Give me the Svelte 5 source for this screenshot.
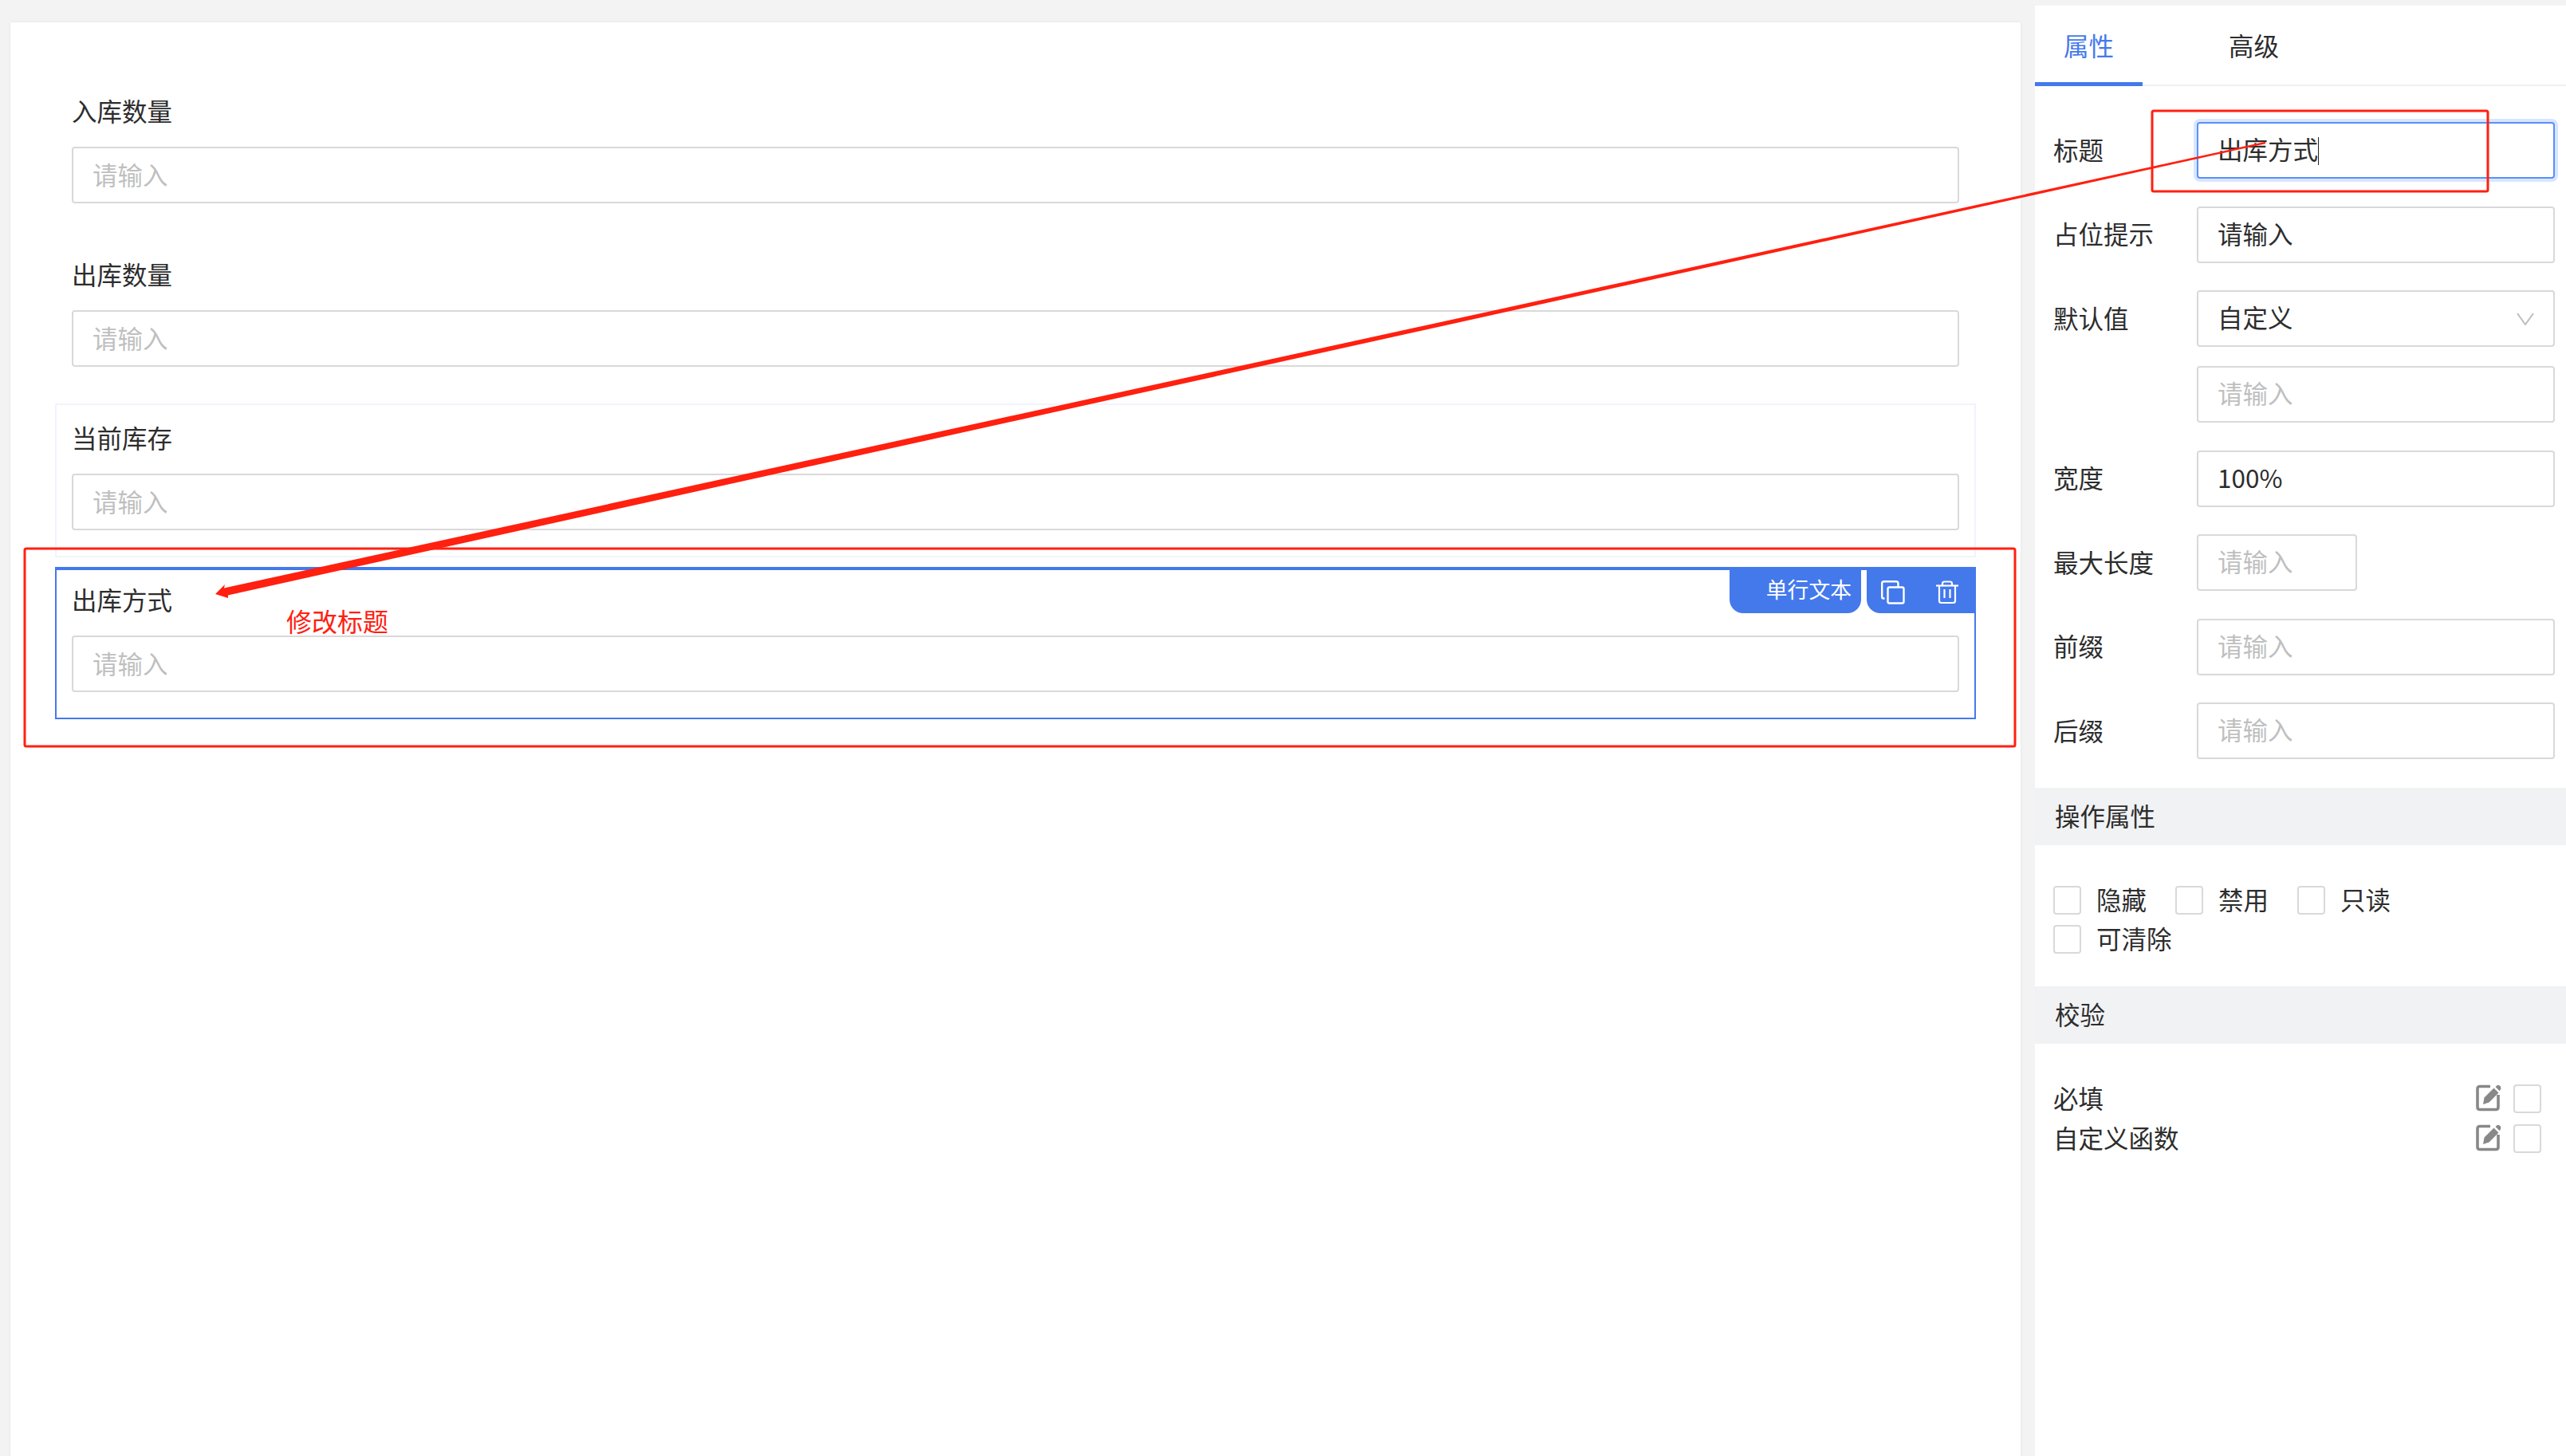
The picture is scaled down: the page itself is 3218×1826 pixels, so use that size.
<script lang="ts">
  const fields = [
    { label: '入库数量', state: '' },
    { label: '出库数量', state: '' },
    { label: '当前库存', state: 'hover' },
    { label: '出库方式', state: 'active' }
  ]

  const props = [
    { label: '前缀' },
    { label: '后缀' }
  ]

  const options = ['隐藏', '禁用', '只读', '可清除']
  const rules = ['必填', '自定义函数']
</script>

<div class="page">
  <main class="canvas">
    {#each fields as f}
      <div class="item {f.state}">
        <div class="item-label">{f.label}</div>
        <div class="field ph">请输入</div>
        {#if f.state === 'active'}
          <div class="toolbar">
            <div class="tag">单行文本</div>
            <div class="ops">
              <svg width="30" height="30" viewBox="0 0 30 30" fill="none" stroke="#fff" stroke-width="2.4">
                <rect x="8.5" y="8.5" width="20" height="20" rx="2" />
                <path d="M4.5 22.5 L3 22.5 Q1.2 22.5 1.2 20.5 L1.2 3.5 Q1.2 1.2 3.5 1.2 L19 1.2 Q21.5 1.2 21.5 3.5 L21.5 8" />
              </svg>
              <svg width="30" height="30" viewBox="0 0 30 30" fill="none" stroke="#fff" stroke-width="2.2">
                <path d="M1 6.5 H29" />
                <path d="M9 6 V4 Q9 1.5 11.5 1.5 H18.5 Q21 1.5 21 4 V6" />
                <path d="M5 7 V25.5 Q5 28 7.5 28 H22.5 Q25 28 25 25.5 V7" />
                <path d="M11.5 11 V22 M18.5 11 V22" />
              </svg>
            </div>
          </div>
        {/if}
      </div>
    {/each}
  </main>

  <aside class="panel">
    <div class="tabs">
      <div class="tab on">属性</div>
      <div class="tab">高级</div>
    </div>

    <div class="form">
      <div class="row">
        <div class="row-label">标题</div>
        <div class="field focus">出库方式<span class="caret"></span></div>
      </div>
      <div class="row">
        <div class="row-label">占位提示</div>
        <div class="field">请输入</div>
      </div>
      <div class="row sub">
        <div class="row-label">默认值</div>
        <div class="field select">
          <span class="select-value">自定义</span>
          <svg width="24" height="16" viewBox="0 0 24 16" fill="none" stroke="#bdbdbd" stroke-width="2">
            <path d="M2 1 L12 15 L22 1" />
          </svg>
        </div>
      </div>
      <div class="row">
        <div class="row-label"></div>
        <div class="field ph">请输入</div>
      </div>
      <div class="row">
        <div class="row-label">宽度</div>
        <div class="field">100%</div>
      </div>
      <div class="row">
        <div class="row-label">最大长度</div>
        <div class="field ph short">请输入</div>
      </div>
      {#each props as p}
        <div class="row">
          <div class="row-label">{p.label}</div>
          <div class="field ph">请输入</div>
        </div>
      {/each}
    </div>

    <div class="section">操作属性</div>
    <div class="checks">
      {#each options as o}
        <label class="check"><span class="box"></span><span class="check-text">{o}</span></label>
      {/each}
    </div>

    <div class="section">校验</div>
    <div class="rules">
      {#each rules as r}
        <div class="rule">
          <span class="rule-name">{r}</span>
          <svg class="edit" width="32" height="34" viewBox="0 0 32 34">
            <path d="M18 2.5 H5 Q2 2.5 2 5.5 V28.5 Q2 31.5 5 31.5 H25 Q28 31.5 28 28.5 V13" fill="none" stroke="#888" stroke-width="3.6" />
            <path d="M9 25 L10.5 16.5 L22.5 4.5 L28.5 10.5 L16.5 22.5 Z M24.5 3 L26.5 1.2 Q28 0.2 29.5 1.2 L31 2.8 Q32 4.5 31 6 L29.8 8.2 Z" fill="#888" />
          </svg>
          <span class="box"></span>
        </div>
      {/each}
    </div>
  </aside>

  <svg class="notes" width="3218" height="1826" viewBox="0 0 3218 1826">
    <g fill="none" stroke="#ff2010" stroke-width="3">
      <rect x="31" y="688" width="2496" height="248" rx="2" />
      <rect x="2699" y="139" width="421" height="101" rx="2" />
    </g>
    <polygon points="270,745 282,733 281,737.5 2841,177.8 2841,180.2 286,746.5 286,750" fill="#ff2010" />
  </svg>
  <div class="note-text">修改标题</div>
</div>

<style>
  :global(body) {
    margin: 0;
    background: #f3f3f3;
    font-family: "Noto Sans CJK SC", "Noto Sans", sans-serif;
  }

  .page {
    position: relative;
    display: flex;
    align-items: flex-start;
    gap: 18px;
    width: 3218px;
    height: 1826px;
    overflow: hidden;
    padding-left: 13px;
    box-sizing: border-box;
    color: #2d2d2d;
    font-size: 31.5px;
  }

  .canvas {
    width: 2521px;
    height: 1798px;
    margin-top: 28px;
    padding: 68px 56px 0;
    box-sizing: border-box;
    background: #fff;
    box-shadow: 0 0 3px rgba(0, 0, 0, 0.08);
    display: flex;
    flex-direction: column;
    gap: 12px;
  }

  .item {
    position: relative;
    height: 193px;
    padding: 17px 19px 0;
    box-sizing: border-box;
    border: 2px solid transparent;
  }

  .item.hover {
    border-color: #f1f4ff;
  }

  .item.active {
    height: 191px;
    padding-top: 13px;
    border-color: #4479ec;
    border-top-width: 4px;
  }

  .item-label {
    height: 46px;
    line-height: 46px;
    margin-bottom: 23px;
  }

  .field {
    height: 71px;
    line-height: 65px;
    padding: 0 24px;
    box-sizing: border-box;
    border: 2px solid #d9d9d9;
    border-radius: 4px;
    background: #fff;
    white-space: nowrap;
  }

  .ph {
    color: #bfbfbf;
  }

  .toolbar {
    position: absolute;
    top: -4px;
    right: -2px;
    height: 58px;
    display: flex;
    color: #fff;
    gap: 7px;
    background: linear-gradient(#4479ec 4px, transparent 4px);
  }

  .tag {
    width: 165px;
    padding-right: 12px;
    box-sizing: border-box;
    text-align: right;
    background: #4479ec;
    border-radius: 0 0 17px 17px;
    font-size: 26.8px;
    line-height: 56px;
  }

  .ops {
    width: 137px;
    padding: 17px 21px 0 18px;
    box-sizing: border-box;
    display: flex;
    justify-content: space-between;
    align-items: flex-start;
    background: #4479ec;
    border-radius: 0 0 0 17px;
  }

  .panel {
    flex: 1;
    height: 1819px;
    margin-top: 7px;
    background: #fff;
  }

  .tabs {
    display: flex;
    height: 99px;
    border-bottom: 2px solid #f0f0f0;
  }

  .tab {
    width: 135px;
    height: 101px;
    margin-right: 72px;
    box-sizing: border-box;
    text-align: center;
    line-height: 98px;
  }

  .tab.on {
    color: #4479ec;
    border-bottom: 5px solid #4479ec;
  }

  .form {
    padding: 45px 14px 36px 23px;
  }

  .row {
    display: flex;
    align-items: center;
    margin-bottom: 34.5px;
  }

  .row.sub {
    margin-bottom: 24px;
  }

  .row:last-child {
    margin-bottom: 0;
  }

  .row-label {
    width: 180px;
    flex-shrink: 0;
    padding-bottom: 4px;
  }

  .row .field {
    flex: 1;
    line-height: 63px;
    position: relative;
  }

  .row .field.short {
    flex: none;
    width: 201px;
  }

  .field.focus {
    border-color: #5b8ff9;
    box-shadow: 0 0 0 4px #d8e6ff;
  }

  .caret {
    display: inline-block;
    width: 1px;
    height: 35px;
    background: #222;
    vertical-align: -7px;
  }

  .select {
    display: flex;
    align-items: center;
    justify-content: space-between;
    padding-right: 23px;
  }

  .select-value {
    margin-bottom: 4px;
  }

  .section {
    height: 72px;
    line-height: 68px;
    padding-left: 25px;
    background: #f1f2f4;
  }

  .checks {
    display: flex;
    flex-wrap: wrap;
    padding: 51px 60px 41px 23px;
    gap: 13px 36px;
  }

  .check {
    display: flex;
    align-items: center;
    gap: 19px;
    height: 36px;
  }

  .check-text,
  .rule-name {
    margin-bottom: 4px;
  }

  .box {
    width: 35px;
    height: 36px;
    flex-shrink: 0;
    box-sizing: border-box;
    border: 2px solid #d9d9d9;
    border-radius: 4px;
    background: #fff;
  }

  .rules {
    padding: 51px 31px 0 23px;
    display: flex;
    flex-direction: column;
    gap: 14px;
  }

  .rule {
    display: flex;
    align-items: center;
    height: 36px;
  }

  .rule-name {
    flex: 1;
  }

  .edit {
    margin: -3px 15px 0 0;
  }

  .notes {
    position: absolute;
    top: 0;
    left: 0;
    pointer-events: none;
  }

  .note-text {
    position: absolute;
    left: 359px;
    top: 754px;
    color: #ff2010;
    font-size: 32px;
    line-height: 48px;
  }
</style>
